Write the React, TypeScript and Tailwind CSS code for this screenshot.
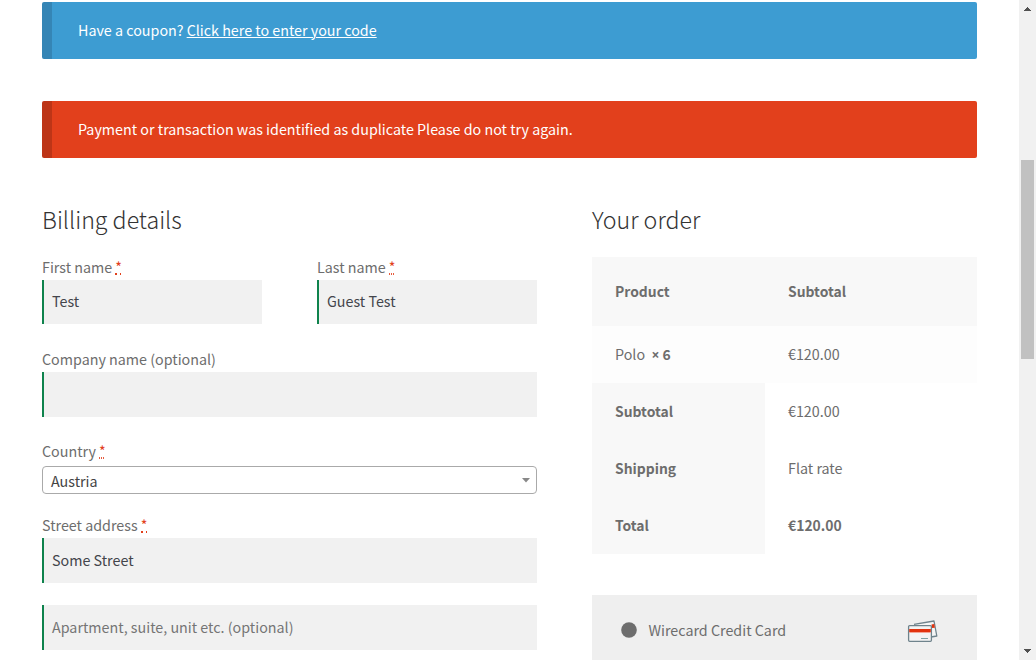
import React from 'react';

type Dots = 'coarse' | 'fine';

function Required({ dots }: { dots: Dots }) {
  return (
    <abbr title="required" className="ml-[3px] flex flex-col self-start text-[#e2401c] no-underline">
      <span className="h-[19px] leading-[26px]">*</span>
      <svg width="6" height="2" shapeRendering="crispEdges" fill="#e2401c">
        {dots === 'coarse' ? (
          <path d="M0 0h2v2H0zM5 0h1v2H5z" />
        ) : (
          <path d="M0 0h1v2H0zM2 0h1v2H2zM4 0h1v2H4z" fillOpacity="0.85" />
        )}
      </svg>
    </abbr>
  );
}

function Label({ children, required }: { children: React.ReactNode; required?: Dots }) {
  return (
    <div className="flex h-[26px] items-center leading-[26px]">
      <span>{children}</span>
      {required && <Required dots={required} />}
    </div>
  );
}

function Field({ value, placeholder, tall = true }: { value?: string; placeholder?: string; tall?: boolean }) {
  return (
    <div
      className={`flex items-center border-l-2 border-[#0f834d] bg-[#f1f1f1] pb-0.5 pl-2 leading-[26px] ${
        tall ? 'h-[45px]' : 'h-11'
      } ${value ? 'text-[#43454b]' : 'text-[#757575]'}`}
    >
      {value ?? placeholder}
    </div>
  );
}

function Notice({ tone, children }: { tone: 'info' | 'error'; children: React.ReactNode }) {
  return (
    <div
      className={`flex h-[57px] shrink-0 items-center rounded-[2px] border-l-[10px] pb-0.5 pl-[26px] text-white ${
        tone === 'info' ? 'border-[#3585b5] bg-[#3d9cd2]' : 'border-[#bd3517] bg-[#e2401c]'
      }`}
    >
      <div className="whitespace-pre leading-[26px]">{children}</div>
    </div>
  );
}

function TotalRow({ name, value, strong = false }: { name: string; value: string; strong?: boolean }) {
  return (
    <div className="flex h-[57px]">
      <div className="flex w-[173px] items-center bg-[#f8f8f8] pl-[23px] text-[13.9px] font-bold">{name}</div>
      <div className={`flex items-center pl-[23px] ${strong ? 'text-[13.9px] font-bold' : 'pb-0.5'}`}>{value}</div>
    </div>
  );
}

function CardsIcon() {
  return (
    <svg width="32" height="24" viewBox="0 0 32 24" fill="none">
      <path d="M7 6.4 27 3 29.8 18 24 19" fill="#f5f6f6" stroke="#6f838c" strokeWidth="1.3" strokeLinejoin="round" />
      <path d="M24.5 6.4 27.2 6 27.9 9.7 25 10.1Z" fill="#e2330f" />
      <rect x="1.6" y="7.6" width="22.8" height="15.7" rx="1" fill="#f4f4f4" stroke="#6f838c" strokeWidth="1.3" />
      <path d="M2.2 11h21.6v3H2.2z" fill="#e2330f" />
      <path d="M2.2 14h21.6v1H2.2z" fill="#f3a697" />
      <path d="M14 20.5h7" stroke="#7fa0a3" />
    </svg>
  );
}

function Scrollbar() {
  return (
    <div className="flex h-full w-[17px] shrink-0 flex-col items-center bg-[#f1f1f1]">
      <svg className="mt-[7px] shrink-0" width="7" height="4" shapeRendering="crispEdges">
        <path d="M3 0h1v1H3zM2 1h3v1H2zM1 2h5v1H1zM0 3h7v1H0z" fill="#505050" />
      </svg>
      <div className="mt-[149px] h-[199px] w-[13px] shrink-0 bg-[#c1c1c1]" />
      <div className="grow" />
      <svg className="mb-[7px] shrink-0" width="7" height="4" shapeRendering="crispEdges">
        <path d="M0 0h7v1H0zM1 1h5v1H1zM2 2h3v1H2zM3 3h1v1H3z" fill="#505050" />
      </svg>
    </div>
  );
}

export default function App() {
  return (
    <div className="flex h-[660px] w-[1036px] overflow-hidden bg-white font-['Noto_Sans_CJK_SC','Source_Sans_Pro',sans-serif] text-[14.3px] text-[#6d6d6d]">
      <main className="flex min-w-0 grow flex-col pl-[42px] pr-[42px] pt-0.5">
        <Notice tone="info">
          Have a coupon? <a className="underline decoration-1 underline-offset-1">Click here to enter your code</a>
        </Notice>
        <div className="h-[42px] shrink-0" />
        <Notice tone="error">Payment or transaction was identified as duplicate Please do not try again.</Notice>

        <div className="flex justify-between pt-[45px]">
          <section className="w-[495px]">
            <h3 className="h-[51px] text-[23.2px] font-light leading-[32px] text-[#333333]">Billing details</h3>
            <div className="flex justify-between">
              <div className="w-[220px]">
                <Label required="coarse">First name</Label>
                <Field value="Test" tall={false} />
              </div>
              <div className="w-[220px]">
                <Label required="fine">Last name</Label>
                <Field value="Guest Test" tall={false} />
              </div>
            </div>
            <div className="pt-[22px]">
              <Label>Company name (optional)</Label>
              <Field />
            </div>
            <div className="pt-[21px]">
              <Label required="fine">Country</Label>
              <div className="mt-0.5 flex h-7 items-center justify-between rounded-[4px] border border-[#aaaaaa] pl-2 pr-[6px] text-[#444444]">
                <span className="pt-0.5">Austria</span>
                <svg width="8" height="5">
                  <path d="M0 0h8L4 4.5z" fill="#888888" />
                </svg>
              </div>
            </div>
            <div className="pt-[18px]">
              <Label required="coarse">Street address</Label>
              <Field value="Some Street" />
            </div>
            <div className="pt-[22px]">
              <Field placeholder="Apartment, suite, unit etc. (optional)" />
            </div>
          </section>

          <section className="w-[385px]">
            <h3 className="h-[54px] text-[23.2px] font-light leading-[32px] text-[#333333]">Your order</h3>
            <div className="flex h-[69px] items-center bg-[#f8f8f8] pl-[23px] text-[13.9px] font-bold">
              <div className="w-[173px]">Product</div>
              <div>Subtotal</div>
            </div>
            <div className="flex h-[57px] items-center bg-[#fdfdfd] pl-[23px]">
              <div className="w-[173px] whitespace-pre">
                Polo&nbsp;{' '}
                <strong className="text-[13.9px] font-bold">
                  <span className="font-['Open_Sans',sans-serif]">×</span> 6
                </strong>
              </div>
              <div className="pb-0.5">€120.00</div>
            </div>
            <TotalRow name="Subtotal" value="€120.00" />
            <TotalRow name="Shipping" value="Flat rate" />
            <TotalRow name="Total" value="€120.00" strong />
            <div className="mt-[41px] flex h-[70px] items-center bg-[#efefef] pl-[29px] pr-[38px]">
              <svg width="16" height="16">
                <circle cx="8" cy="8" r="7.8" fill="#6d6d6d" />
              </svg>
              <span className="grow pl-[11.5px]">Wirecard Credit Card</span>
              <CardsIcon />
            </div>
          </section>
        </div>
      </main>
      <Scrollbar />
    </div>
  );
}
